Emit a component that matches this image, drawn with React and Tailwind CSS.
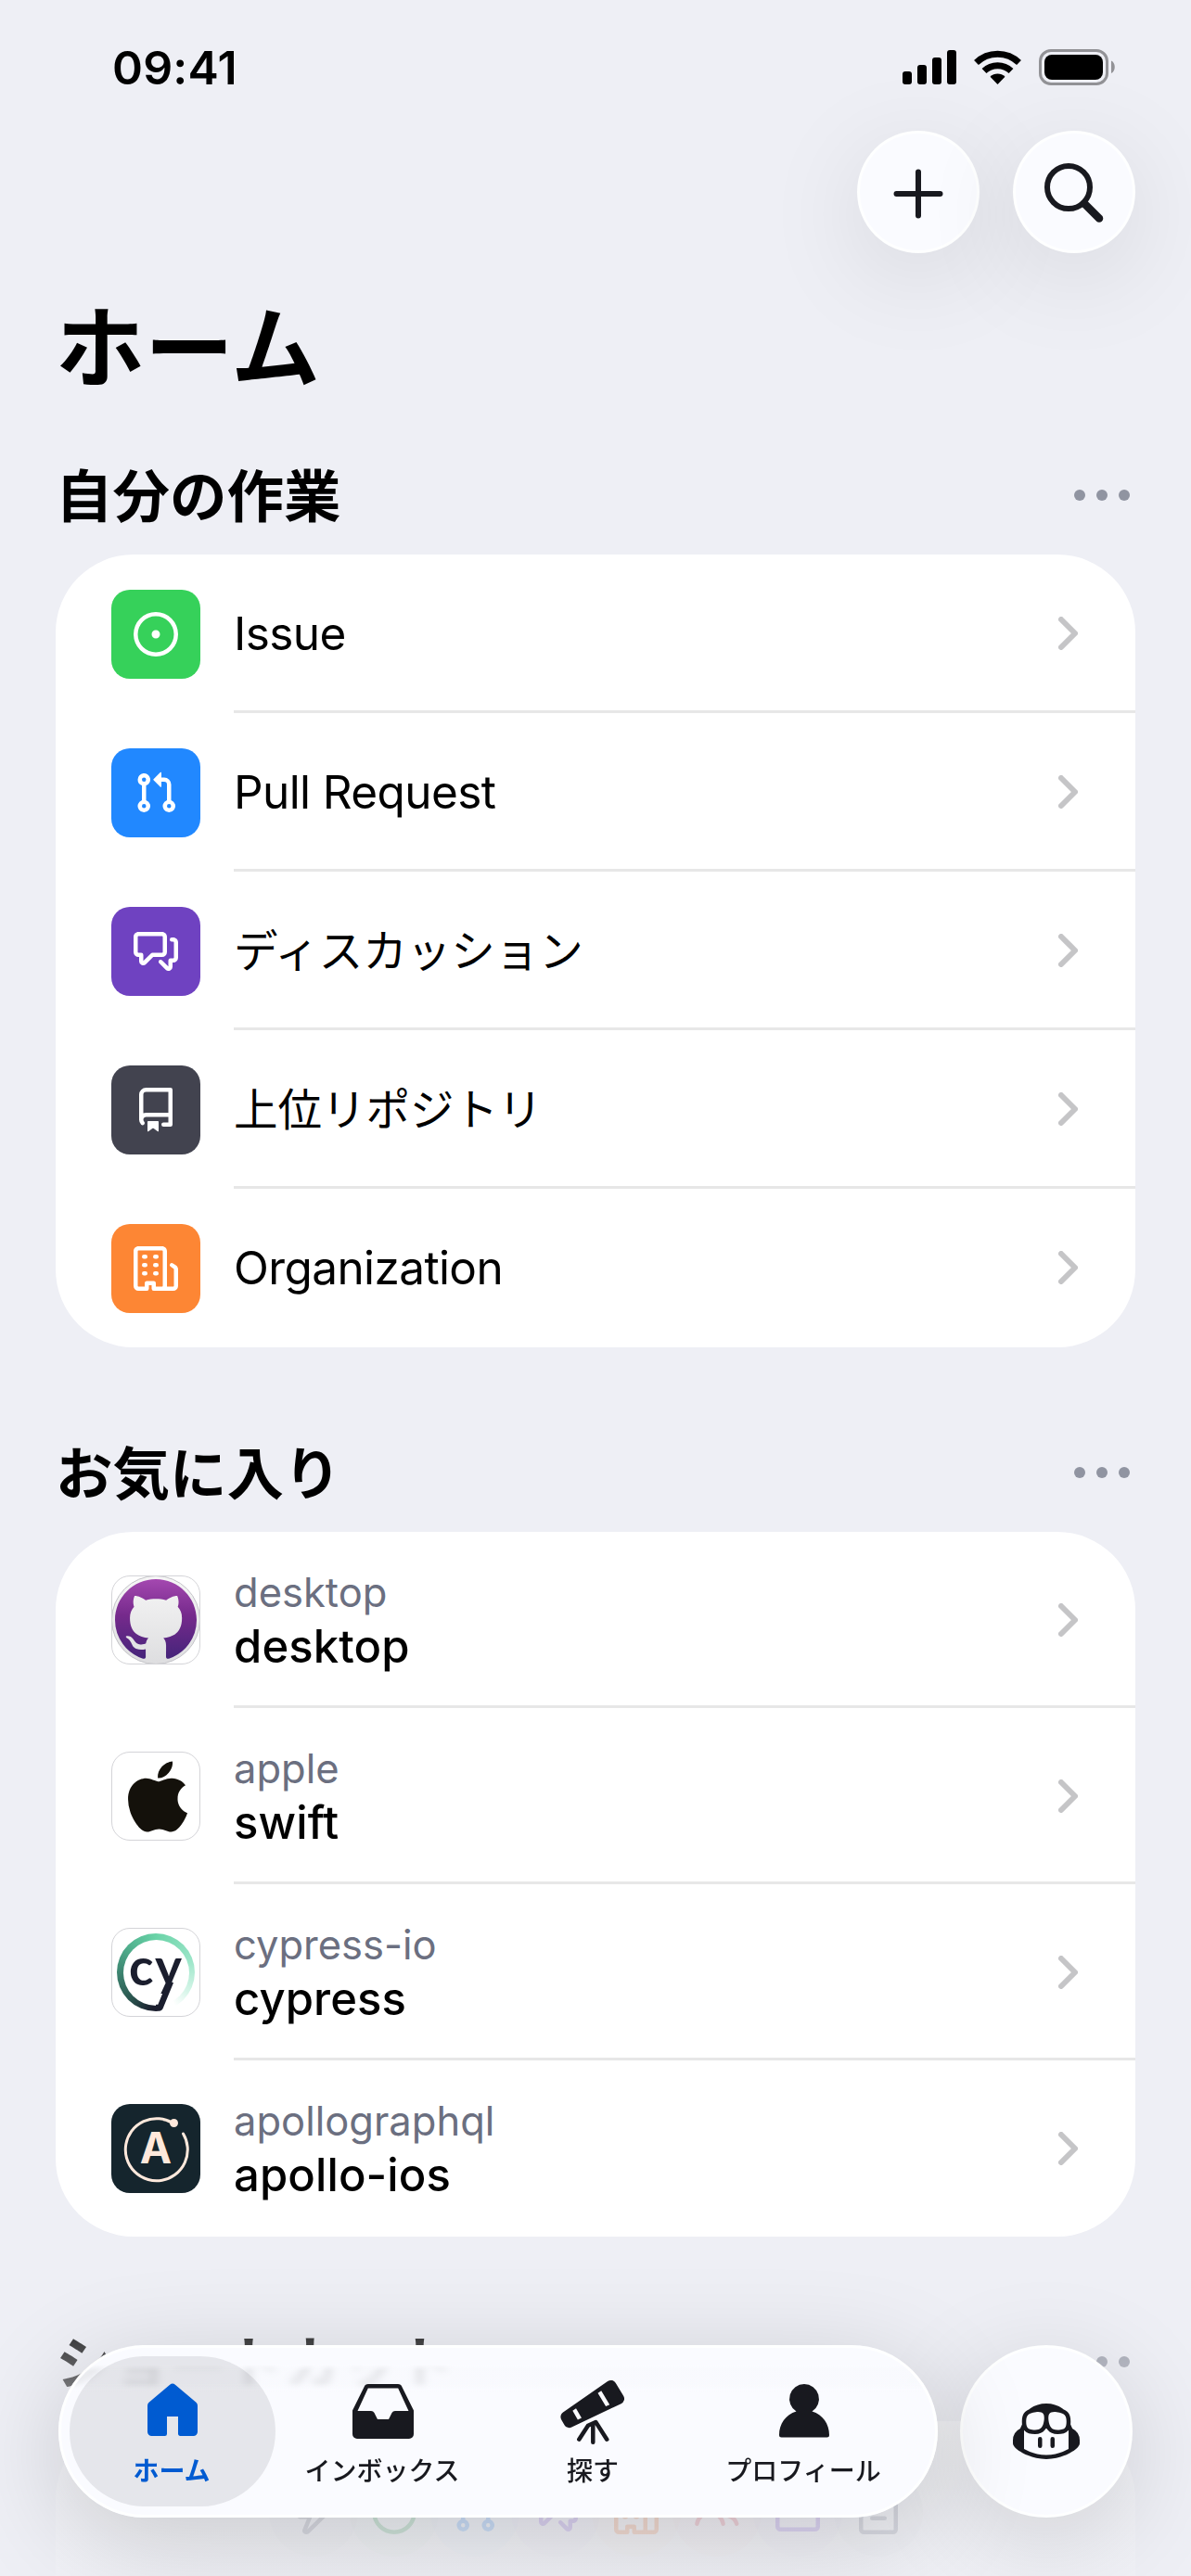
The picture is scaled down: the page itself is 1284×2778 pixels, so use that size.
import React from "react";
import { FaApple } from "react-icons/fa";
import { GoCopilot, GoHomeFill, GoTelescopeFill } from "react-icons/go";

const Octicon = ({ d, className = "size-12" }) => (
  <svg viewBox="0 0 16 16" fill="currentColor" className={className}>
    <path d={d} />
  </svg>
);

const paths = {
  issue:
    "M8 9.5a1.5 1.5 0 1 0 0-3 1.5 1.5 0 0 0 0 3ZM8 0a8 8 0 1 1 0 16A8 8 0 0 1 8 0ZM1.5 8a6.5 6.5 0 1 0 13 0 6.5 6.5 0 0 0-13 0Z",
  pull: "M1.5 3.25a2.25 2.25 0 1 1 3 2.122v5.256a2.251 2.251 0 1 1-1.5 0V5.372A2.25 2.25 0 0 1 1.5 3.25Zm5.677-.177L9.573.677A.25.25 0 0 1 10 .854V2.5h1A2.5 2.5 0 0 1 13.5 5v5.628a2.251 2.251 0 1 1-1.5 0V5a1 1 0 0 0-1-1h-1v1.646a.25.25 0 0 1-.427.177L7.177 3.427a.25.25 0 0 1 0-.354ZM3.75 2.5a.75.75 0 1 0 0 1.5.75.75 0 0 0 0-1.5Zm0 9.5a.75.75 0 1 0 0 1.5.75.75 0 0 0 0-1.5Zm8.25.75a.75.75 0 1 0 1.5 0 .75.75 0 0 0-1.5 0Z",
  discussion:
    "M1.75 1h8.5c.966 0 1.75.784 1.75 1.75v5.5A1.75 1.75 0 0 1 10.25 10H7.061l-2.574 2.573A1.458 1.458 0 0 1 2 11.543V10h-.25A1.75 1.75 0 0 1 0 8.25v-5.5C0 1.784.784 1 1.75 1ZM1.5 2.75v5.5c0 .138.112.25.25.25h1a.75.75 0 0 1 .75.75v2.19l2.72-2.72a.749.749 0 0 1 .53-.22h3.5a.25.25 0 0 0 .25-.25v-5.5a.25.25 0 0 0-.25-.25h-8.5a.25.25 0 0 0-.25.25Zm13 2a.25.25 0 0 0-.25-.25h-.5a.75.75 0 0 1 0-1.5h.5c.966 0 1.75.784 1.75 1.75v5.5A1.75 1.75 0 0 1 14.25 12H14v1.543a1.458 1.458 0 0 1-2.487 1.03L9.22 12.28a.749.749 0 0 1 .326-1.275.749.749 0 0 1 .734.215l2.22 2.22v-2.19a.75.75 0 0 1 .75-.75h1a.25.25 0 0 0 .25-.25Z",
  repo: "M2 2.5A2.5 2.5 0 0 1 4.5 0h8.75a.75.75 0 0 1 .75.75v12.5a.75.75 0 0 1-.75.75h-2.5a.75.75 0 0 1 0-1.5h1.75v-2h-8a1 1 0 0 0-.714 1.7.75.75 0 1 1-1.072 1.05A2.495 2.495 0 0 1 2 11.5Zm10.5-1h-8a1 1 0 0 0-1 1v6.708A2.486 2.486 0 0 1 4.5 9h8ZM5 12.25a.25.25 0 0 1 .25-.25h3.5a.25.25 0 0 1 .25.25v3.25a.25.25 0 0 1-.4.2l-1.45-1.087a.249.249 0 0 0-.3 0L5.4 15.7a.25.25 0 0 1-.4-.2Z",
  organization:
    "M1.75 16A1.75 1.75 0 0 1 0 14.25V1.75C0 .784.784 0 1.75 0h8.5C11.216 0 12 .784 12 1.75v12.5c0 .085-.006.168-.018.25h2.268a.25.25 0 0 0 .25-.25V8.285a.25.25 0 0 0-.111-.208l-1.055-.703a.749.749 0 1 1 .832-1.248l1.055.703c.487.325.779.871.779 1.456v5.965A1.75 1.75 0 0 1 14.25 16h-3.5a.766.766 0 0 1-.197-.026c-.099.017-.2.026-.303.026h-3a.75.75 0 0 1-.75-.75V14h-1v1.25a.75.75 0 0 1-.75.75Zm-.25-1.75c0 .138.112.25.25.25H4v-1.25a.75.75 0 0 1 .75-.75h2.5a.75.75 0 0 1 .75.75v1.25h2.25a.25.25 0 0 0 .25-.25V1.75a.25.25 0 0 0-.25-.25h-8.5a.25.25 0 0 0-.25.25ZM3.75 6h.5a.75.75 0 0 1 0 1.5h-.5a.75.75 0 0 1 0-1.5ZM3 3.75A.75.75 0 0 1 3.75 3h.5a.75.75 0 0 1 0 1.5h-.5A.75.75 0 0 1 3 3.75Zm4 3A.75.75 0 0 1 7.75 6h.5a.75.75 0 0 1 0 1.5h-.5A.75.75 0 0 1 7 6.75ZM7.75 3h.5a.75.75 0 0 1 0 1.5h-.5a.75.75 0 0 1 0-1.5ZM3 9.75A.75.75 0 0 1 3.75 9h.5a.75.75 0 0 1 0 1.5h-.5A.75.75 0 0 1 3 9.75ZM7.75 9h.5a.75.75 0 0 1 0 1.5h-.5a.75.75 0 0 1 0-1.5Z",
  zap: "M9.504.43a1.516 1.516 0 0 1 2.437 1.713L10.415 5.5h2.123c1.57 0 2.346 1.909 1.22 3.004l-7.34 7.142a1.249 1.249 0 0 1-.871.354h-.302a1.25 1.25 0 0 1-1.157-1.723L5.633 10.5H3.462c-1.57 0-2.346-1.909-1.22-3.004L9.503.429Zm1.047 1.074L3.286 8.571A.25.25 0 0 0 3.462 9H6.75a.75.75 0 0 1 .694 1.034l-1.713 4.188 6.982-6.793A.25.25 0 0 0 12.538 7H9.25a.75.75 0 0 1-.683-1.06l2.008-4.418.003-.006-.004-.009-.006-.006-.008-.001c-.003 0-.006.002-.009.004Z",
  people:
    "M2 5.5a3.5 3.5 0 1 1 5.898 2.549 5.508 5.508 0 0 1 3.034 4.084.75.75 0 1 1-1.482.235 4 4 0 0 0-7.9 0 .75.75 0 0 1-1.482-.236A5.507 5.507 0 0 1 3.102 8.05 3.493 3.493 0 0 1 2 5.5ZM11 4a3.001 3.001 0 0 1 2.22 5.018 5.01 5.01 0 0 1 2.56 3.012.749.749 0 0 1-.885.954.752.752 0 0 1-.549-.514 3.507 3.507 0 0 0-2.522-2.372.75.75 0 0 1-.574-.73v-.352a.75.75 0 0 1 .416-.672A1.5 1.5 0 0 0 11 5.5.75.75 0 0 1 11 4Zm-5.5-.5a2 2 0 1 0-.001 3.999A2 2 0 0 0 5.5 3.5Z",
  browser:
    "M0 2.75C0 1.784.784 1 1.75 1h12.5c.966 0 1.75.784 1.75 1.75v10.5A1.75 1.75 0 0 1 14.25 15H1.75A1.75 1.75 0 0 1 0 13.25ZM14.5 6h-13v7.25c0 .138.112.25.25.25h12.5a.25.25 0 0 0 .25-.25Z",
  list: "M2.75 0h10.5C14.216 0 15 .784 15 1.75v12.5A1.75 1.75 0 0 1 13.25 16H2.75A1.75 1.75 0 0 1 1 14.25V1.75C1 .784 1.784 0 2.75 0ZM2.5 1.75v12.5c0 .138.112.25.25.25h10.5a.25.25 0 0 0 .25-.25V1.75a.25.25 0 0 0-.25-.25H2.75a.25.25 0 0 0-.25.25ZM5.75 9.5h4.5a.75.75 0 0 1 0 1.5h-4.5a.75.75 0 0 1 0-1.5Zm0-5h4.5a.75.75 0 0 1 0 1.5h-4.5a.75.75 0 0 1 0-1.5Z",
};

const workItems = [
  { label: "Issue", icon: paths.issue, bg: "bg-[#36d15a]" },
  { label: "Pull Request", icon: paths.pull, bg: "bg-[#2188ff]" },
  { label: "ディスカッション", icon: paths.discussion, bg: "bg-[#6f42c1]", jp: true },
  { label: "上位リポジトリ", icon: paths.repo, bg: "bg-[#42434f]", jp: true },
  { label: "Organization", icon: paths.organization, bg: "bg-[#fd8634]" },
];

const DesktopAvatar = () => (
  <div className="size-24 rounded-[20px] border border-[#d4d4d8] bg-white flex items-center justify-center overflow-hidden">
    <div className="size-24 shrink-0 rounded-full border border-[#c4c4c8] bg-linear-to-b from-[#f6f6f6] to-[#dedee0] flex items-center justify-center">
      <svg viewBox="0 0 16 16" className="size-[88px] shrink-0">
        <linearGradient id="purple" x1="0" y1="0" x2="0" y2="1">
          <stop offset="0" stopColor="#a448b0" />
          <stop offset="0.45" stopColor="#762a8c" />
          <stop offset="1" stopColor="#45247a" />
        </linearGradient>
        <path
          fill="url(#purple)"
          d="M8 0c4.42 0 8 3.58 8 8a8.013 8.013 0 0 1-5.45 7.59c-.4.08-.55-.17-.55-.38 0-.27.01-1.13.01-2.2 0-.75-.25-1.23-.54-1.48 1.78-.2 3.65-.88 3.65-3.95 0-.88-.31-1.59-.82-2.15.08-.2.36-1.02-.08-2.12 0 0-.67-.22-2.2.82-.64-.18-1.32-.27-2-.27-.68 0-1.36.09-2 .27-1.53-1.03-2.2-.82-2.2-.82-.44 1.1-.16 1.92-.08 2.12-.51.56-.82 1.28-.82 2.15 0 3.06 1.86 3.75 3.64 3.95-.23.2-.44.55-.51 1.07-.46.21-1.61.55-2.33-.66-.15-.24-.6-.83-1.23-.82-.67.01-.27.38.01.53.34.19.73.9.82 1.13.16.45.68 1.31 2.69.94 0 .67.01 1.3.01 1.49 0 .21-.15.45-.55.38A7.995 7.995 0 0 1 0 8c0-4.42 3.58-8 8-8Z"
        />
      </svg>
    </div>
  </div>
);

const AppleAvatar = () => (
  <div className="size-24 pl-[3px] rounded-[20px] border border-[#d4d4d8] bg-white flex items-center justify-center">
    <FaApple className="h-[87px] w-[66px] text-[#14110b]" />
  </div>
);

const CypressAvatar = () => (
  <div className="size-24 rounded-[20px] border border-[#d4d4d8] bg-white flex items-center justify-center">
    <div className="size-[84px] rounded-full bg-[conic-gradient(#69d3a7_0deg,#9be5c8_70deg,#d5f5e8_120deg,#ffffff_150deg,#ffffff_172deg,#1b1e2e_173deg,#1b1e2e_185deg,#2b5750_225deg,#3f8a74_275deg,#54b692_320deg,#69d3a7_360deg)] flex items-center justify-center">
      <div className="size-[71px] rounded-full bg-white" />
    </div>
    <svg viewBox="0 0 96 96" className="absolute size-24">
      <text x="19" y="62" fontSize="55" fontWeight="700" fill="#1b1e2e" className="font-[Lato,sans-serif]">
        c
      </text>
      <text x="47" y="62" fontSize="55" fontWeight="700" fill="#1b1e2e" className="font-[Lato,sans-serif]">
        y
      </text>
      <path d="M64 58 52.500 86H48" fill="none" stroke="#1b1e2e" strokeWidth="6.500" strokeLinejoin="round" />
    </svg>
  </div>
);

const ApolloAvatar = () => (
  <svg viewBox="0 0 96 96" className="size-24 rounded-[20px] bg-[#15252d]">
    <path d="M66 20.500A33.500 33.500 0 1 0 77.500 32" fill="none" stroke="#ffe9dc" strokeWidth="3" strokeLinecap="round" />
    <circle cx="67.500" cy="20.500" r="4.500" fill="#ffe9dc" />
    <text x="48" y="63.500" fontSize="46" fontWeight="700" textAnchor="middle" fill="#ffe9dc">
      A
    </text>
  </svg>
);

const favorites = [
  { owner: "desktop", name: "desktop", avatar: <DesktopAvatar /> },
  { owner: "apple", name: "swift", avatar: <AppleAvatar /> },
  { owner: "cypress-io", name: "cypress", avatar: <CypressAvatar /> },
  { owner: "apollographql", name: "apollo-ios", avatar: <ApolloAvatar /> },
];

const shortcuts = [
  { icon: paths.zap, color: "bg-[#6b6f80]/8 text-[#6b6f80]" },
  { icon: paths.issue, color: "bg-[#2da44e]/8 text-[#2da44e]" },
  { icon: paths.pull, color: "bg-[#2188ff]/8 text-[#2188ff]" },
  { icon: paths.discussion, color: "bg-[#8250df]/8 text-[#8250df]" },
  { icon: paths.organization, color: "bg-[#fd8634]/8 text-[#fd7424]" },
  { icon: paths.people, color: "bg-[#ea4a5a]/8 text-[#ea4a5a]" },
  { icon: paths.browser, color: "bg-[#8250df]/8 text-[#8250df]" },
  { icon: paths.list, color: "bg-[#6b6f80]/8 text-[#6b6f80]" },
];

const StatusBar = () => (
  <div className="h-[141px] pl-[121px] pr-[81px] pt-[36px] flex justify-between items-start">
    <span className="text-[50px] leading-[74px] font-semibold tracking-[0.2px]">09:41</span>
    <svg viewBox="0 0 231 40" className="w-[231px] h-10 mt-[17px]">
      <rect x="1" y="24" width="10" height="14" rx="3" />
      <rect x="17" y="17" width="10" height="21" rx="3" />
      <rect x="33" y="9" width="10" height="29" rx="3" />
      <rect x="49" y="1" width="10" height="37" rx="3" />
      <path d="M103.500 38 95.500 29.800a11.500 11.500 0 0 1 16 0Z" />
      <path d="M89 23.500a21 21 0 0 1 29 0M80.500 14.500a33 33 0 0 1 46 0" fill="none" stroke="#000" strokeWidth="7" />
      <rect x="149.500" y="1.500" width="72" height="36" rx="11.500" fill="none" stroke="#929296" strokeWidth="3" />
      <rect x="154" y="6" width="63" height="27" rx="8" />
      <path d="M226 12.500c5 2 5 11.500 0 13.500Z" fill="#929296" />
    </svg>
  </div>
);

const RoundButton = ({ children }) => (
  <button className="size-[132px] rounded-full bg-[#fafbff] border-[3px] border-white/90 shadow-[0_24px_110px_rgba(0,0,0,0.1)] flex items-center justify-center">
    {children}
  </button>
);

const SectionHeader = ({ title }) => (
  <div className="h-32 pr-1.5 flex items-center justify-between">
    <h2 className="pt-[3px] text-[61.5px] leading-none font-bold">{title}</h2>
    <div className="flex gap-3">
      <span className="size-3 rounded-full bg-[#9094a1]" />
      <span className="size-3 rounded-full bg-[#9094a1]" />
      <span className="size-3 rounded-full bg-[#9094a1]" />
    </div>
  </div>
);

const Chevron = () => (
  <svg viewBox="0 0 21 36" className="w-[21px] h-9" fill="none" stroke="#c5c5c7" strokeWidth="6" strokeLinecap="round" strokeLinejoin="round">
    <path d="M3 3l15 15L3 33" />
  </svg>
);

const Row = ({ icon, last, className, children }) => (
  <div className={`pl-[60px] flex items-center ${className}`}>
    <div className="relative shrink-0">{icon}</div>
    <div
      className={`ml-9 h-full flex-1 pt-[2px] pr-[62px] flex items-center justify-between border-b-[3px] ${
        last ? "border-transparent" : "border-[#e7e7e7]"
      }`}
    >
      {children}
      <Chevron />
    </div>
  </div>
);

const InboxIcon = () => (
  <svg viewBox="0 0 72 72" className="size-[72px]" fill="currentColor">
    <path
      fillRule="evenodd"
      d="M15.500 10.200A5 5 0 0 1 20 7h32a5 5 0 0 1 4.500 3.200L69 35.500V61a5 5 0 0 1-5 5H8a5 5 0 0 1-5-5V35.500ZM19.800 11.500 8.500 36H23a4 4 0 0 1 3.500 2L30 45h12l3.500-7a4 4 0 0 1 3.500-2h14.500L52.200 11.500Z"
    />
  </svg>
);

const PersonIcon = () => (
  <svg viewBox="0 0 72 72" className="size-[72px]" fill="currentColor">
    <path d="M36 7a16 16 0 0 1 8.500 29.500C56 40 63 50 63 62a2.500 2.500 0 0 1-2.500 2.500h-49A2.500 2.500 0 0 1 9 62c0-12 7-22 18.500-25.500A16 16 0 0 1 36 7Z" />
  </svg>
);

const tabs = [
  { label: "ホーム", icon: <GoHomeFill className="size-[72px]" />, active: true },
  { label: "インボックス", icon: <InboxIcon /> },
  { label: "探す", icon: <GoTelescopeFill className="size-[72px]" /> },
  { label: "プロフィール", icon: <PersonIcon /> },
];

const TabBar = () => (
  <div className="absolute left-[63px] right-[63px] bottom-[63px] flex gap-6">
    <nav className="w-[948px] h-[186px] pl-[9px] rounded-full border-[3px] border-white/90 bg-[linear-gradient(#fafbff_10%,#fafbffd8_14%,#fafbffd8_21%,#fafbff_26%)] backdrop-blur-[4px] shadow-[0_24px_110px_rgba(0,0,0,0.17)] flex items-center gap-[5px]">
      {tabs.map((tab) => (
        <button
          key={tab.label}
          className={`w-[222px] h-[162px] shrink-0 pt-[23px] rounded-full flex flex-col items-center ${
            tab.active ? "bg-[#18191f]/9 text-[#005bd1]" : "text-[#18191f]"
          }`}
        >
          {tab.icon}
          <span
            className={`mt-[13px] pr-[2px] text-[28px] leading-8 whitespace-nowrap ${
              tab.active ? "font-semibold" : "font-medium"
            }`}
          >
            {tab.label}
          </span>
        </button>
      ))}
    </nav>
    <button className="size-[186px] rounded-full border-[3px] border-white/90 bg-[#fafbff] shadow-[0_24px_110px_rgba(0,0,0,0.15)] flex items-center justify-center text-[#18191f]">
      <GoCopilot className="size-[72px]" />
    </button>
  </div>
);

const App = () => {
  return (
    <div className="relative w-[1284px] h-[2778px] overflow-hidden bg-[#eeeff5] text-black font-[Inter,'Noto_Sans_CJK_JP',sans-serif]">
      <StatusBar />
      <div className="px-[60px] flex justify-end gap-9">
        <RoundButton>
          <svg viewBox="0 0 54 54" className="size-[54px] mt-[3px]" stroke="#18191f" strokeWidth="6" strokeLinecap="round">
            <path d="M27 3.500v47M3.500 27h47" />
          </svg>
        </RoundButton>
        <RoundButton>
          <svg viewBox="0 0 66 66" className="size-[66px]" fill="none" stroke="#18191f" strokeLinecap="round">
            <circle cx="27" cy="28" r="23" strokeWidth="6" />
            <path d="M44 45.500 60 61.500" strokeWidth="8.500" />
          </svg>
        </RoundButton>
      </div>

      <main className="px-[60px]">
        <h1 className="h-[197px] pt-[7px] flex items-center text-[96px] leading-none font-bold">ホーム</h1>

        <SectionHeader title="自分の作業" />
        <div className="rounded-[84px] bg-white overflow-hidden">
          {workItems.map((item, i) => (
            <Row
              key={item.label}
              last={i === workItems.length - 1}
              className="h-[171px]"
              icon={
                <div className={`size-24 rounded-[20px] text-white flex items-center justify-center ${item.bg}`}>
                  <Octicon d={item.icon} />
                </div>
              }
            >
              <span
                className={
                  item.jp ? "pt-[2px] text-[47.5px] leading-none" : "pt-[2px] text-[49.500px] leading-none tracking-[-0.6px]"
                }
              >
                {item.label}
              </span>
            </Row>
          ))}
        </div>

        <div className="mt-[71px]">
          <SectionHeader title="お気に入り" />
        </div>
        <div className="rounded-[84px] bg-white overflow-hidden">
          {favorites.map((repo, i) => (
            <Row key={repo.owner} last={i === favorites.length - 1} className="h-[190px]" icon={repo.avatar}>
              <div>
                <p className="pt-[2px] text-[43.5px] leading-[57px] text-[#6b6f80]">{repo.owner}</p>
                <p className="text-[49px] leading-[60px] font-medium tracking-[0.1px]">{repo.name}</p>
              </div>
            </Row>
          ))}
        </div>

        <div className="mt-[71px]">
          <SectionHeader title="ショートカット" />
        </div>
        <div className="h-[300px] pt-[50px] rounded-t-[84px] bg-white flex justify-center -space-x-[9px]">
          {shortcuts.map((item, i) => (
            <div key={i} className={`size-24 rounded-full flex items-center justify-center ${item.color}`}>
              <Octicon d={item.icon} />
            </div>
          ))}
        </div>
      </main>

      {/* Content fades out behind the tab bar */}
      <div className="absolute inset-x-0 bottom-0 h-[370px] bg-[linear-gradient(#eeeff500,#eeeff540_30%,#eeeff580_45%,#eeeff5c8_75%,#eeeff5e0)]" />
      <TabBar />
    </div>
  );
};

export default App;
